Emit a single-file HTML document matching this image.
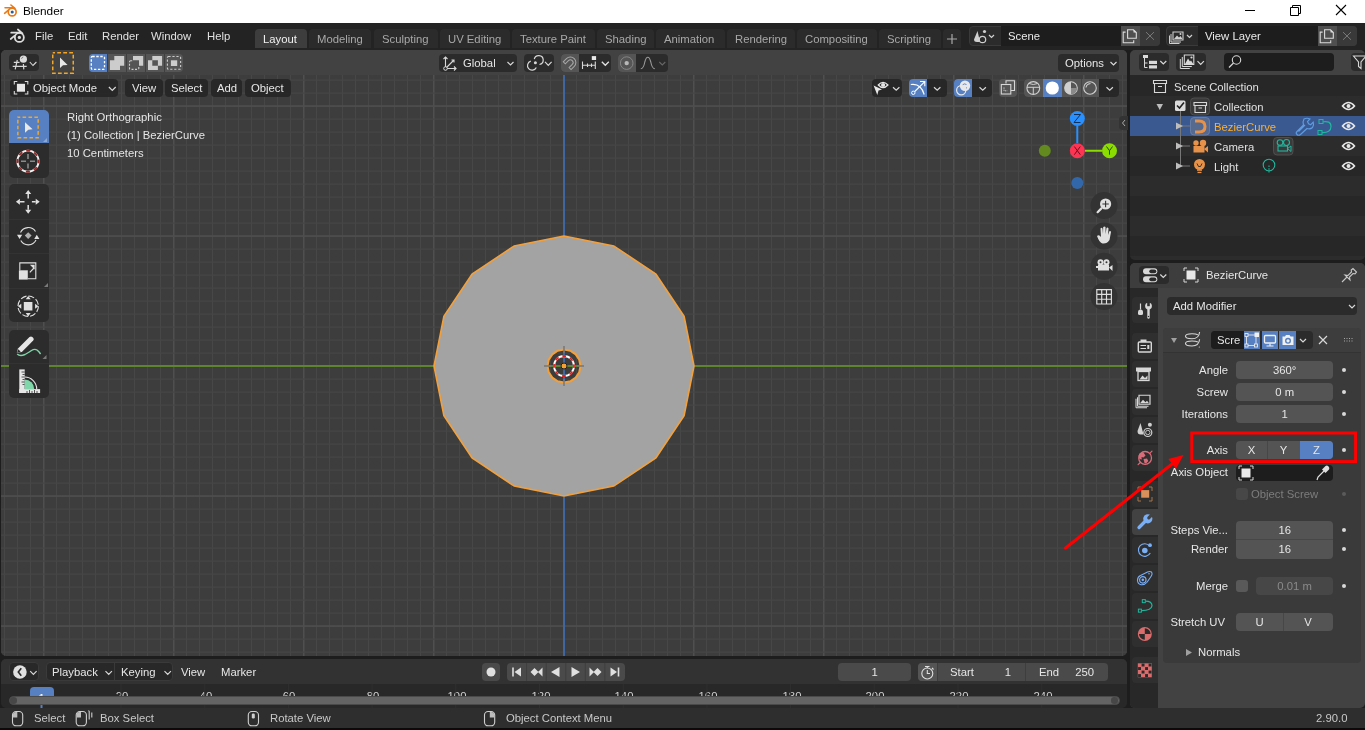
<!DOCTYPE html>
<html><head><meta charset="utf-8">
<style>
*{margin:0;padding:0;box-sizing:border-box}
html,body{width:1365px;height:730px;overflow:hidden;background:#1d1d1d;font-family:"Liberation Sans",sans-serif;font-size:11.3px;color:#e6e6e6}
.a{position:absolute}
.t{position:absolute;white-space:nowrap;line-height:20px;will-change:transform}
svg{position:absolute;overflow:visible}
.btn{position:absolute;border-radius:4px}
.dk{background:#2b2b2b}
</style></head><body>
<!-- TITLE BAR -->
<div class="a" style="left:0;top:0;width:1365px;height:23px;background:#fff"></div>
<svg style="left:0;top:0" width="30" height="22" viewBox="0 0 30 22">
 <g transform="translate(12.2 12) scale(0.88) translate(-11.35 -10.46)">
 <circle cx="11.35" cy="10.46" r="4.5" fill="#fff" stroke="#ea7a14" stroke-width="1.9"/>
 <circle cx="11.35" cy="10.46" r="1.8" fill="#2a5f96"/>
 <path d="M3.2 5.7 H12.1 M2.7 12 L6.7 8.6 M9.9 2.5 L14.5 6.3" stroke="#ea7a14" stroke-width="1.8" stroke-linecap="round" fill="none"/>
 </g>
</svg>
<div class="t" style="left:23px;top:1px;color:#000;font-size:11.8px">Blender</div>
<svg style="left:1240px;top:0" width="125" height="22">
 <path d="M5 10.5 H15" stroke="#000" stroke-width="1"/>
 <path d="M50.5 7.5 h8 v8 h-8 z M52.5 7.5 v-2 h8 v8 h-2" stroke="#000" stroke-width="1" fill="none"/>
 <path d="M96 5 L106 15 M106 5 L96 15" stroke="#000" stroke-width="1.1"/>
</svg>
<!-- TOP BAR -->
<div class="a" style="left:0;top:23px;width:1365px;height:27px;background:#232323"></div>
<svg style="left:8px;top:27px" width="20" height="18" viewBox="0 0 20 18">
 <circle cx="11.35" cy="10.46" r="4.5" fill="none" stroke="#dedede" stroke-width="1.8"/>
 <circle cx="11.35" cy="10.46" r="1.6" fill="#dedede"/>
 <path d="M3.2 5.7 H12.1 M2.7 12 L6.7 8.6 M9.9 2.5 L14.5 6.3" stroke="#dedede" stroke-width="1.7" stroke-linecap="round" fill="none"/>
</svg>
<div class="t" style="left:34.5px;top:26.2px;color:#e0e0e0">File</div>
<div class="t" style="left:67.5px;top:26.2px;color:#e0e0e0">Edit</div>
<div class="t" style="left:101.8px;top:26.2px;color:#e0e0e0">Render</div>
<div class="t" style="left:151.3px;top:26.2px;color:#e0e0e0">Window</div>
<div class="t" style="left:206.8px;top:26.2px;color:#e0e0e0">Help</div>
<div class="a" style="left:255px;top:28.5px;width:52px;height:19.5px;background:#3d3d3d;border-radius:4px 4px 0 0"></div>
<div class="a" style="left:309px;top:28.5px;width:62px;height:19.5px;background:#2b2b2b;border-radius:4px 4px 0 0"></div>
<div class="a" style="left:374px;top:28.5px;width:64px;height:19.5px;background:#2b2b2b;border-radius:4px 4px 0 0"></div>
<div class="a" style="left:440px;top:28.5px;width:70px;height:19.5px;background:#2b2b2b;border-radius:4px 4px 0 0"></div>
<div class="a" style="left:512px;top:28.5px;width:83px;height:19.5px;background:#2b2b2b;border-radius:4px 4px 0 0"></div>
<div class="a" style="left:597px;top:28.5px;width:57px;height:19.5px;background:#2b2b2b;border-radius:4px 4px 0 0"></div>
<div class="a" style="left:656px;top:28.5px;width:69px;height:19.5px;background:#2b2b2b;border-radius:4px 4px 0 0"></div>
<div class="a" style="left:727px;top:28.5px;width:68px;height:19.5px;background:#2b2b2b;border-radius:4px 4px 0 0"></div>
<div class="a" style="left:797px;top:28.5px;width:80px;height:19.5px;background:#2b2b2b;border-radius:4px 4px 0 0"></div>
<div class="a" style="left:879px;top:28.5px;width:62px;height:19.5px;background:#2b2b2b;border-radius:4px 4px 0 0"></div>
<div class="a" style="left:943px;top:28.5px;width:18px;height:19.5px;background:#2b2b2b;border-radius:4px 4px 0 0"></div>
<div class="t" style="left:263.3px;top:29.4px;color:#f0f0f0">Layout</div>
<div class="t" style="left:316.5px;top:29.4px;color:#a8a8a8">Modeling</div>
<div class="t" style="left:381.5px;top:29.4px;color:#a8a8a8">Sculpting</div>
<div class="t" style="left:447.5px;top:29.4px;color:#a8a8a8">UV Editing</div>
<div class="t" style="left:519.5px;top:29.4px;color:#a8a8a8">Texture Paint</div>
<div class="t" style="left:604.5px;top:29.4px;color:#a8a8a8">Shading</div>
<div class="t" style="left:663.5px;top:29.4px;color:#a8a8a8">Animation</div>
<div class="t" style="left:734.5px;top:29.4px;color:#a8a8a8">Rendering</div>
<div class="t" style="left:804.5px;top:29.4px;color:#a8a8a8">Compositing</div>
<div class="t" style="left:886.5px;top:29.4px;color:#a8a8a8">Scripting</div>
<svg style="left:943px;top:28px" width="18" height="22"><path d="M9 6 V16 M4 11 H14" stroke="#a8a8a8" stroke-width="1.2"/></svg>
<!-- scene selector -->
<div class="a" style="left:969px;top:26px;width:191px;height:20px;background:#2b2b2b;border-radius:4px;border:1px solid #3a3a3a"></div>
<div class="a" style="left:1000.5px;top:26px;width:120.5px;height:20px;background:#1d1d1d"></div>
<div class="a" style="left:1121px;top:26px;width:19px;height:20px;background:#4f4f4f"></div>
<div class="a" style="left:1140px;top:26px;width:20px;height:20px;background:#393939;border-radius:0 4px 4px 0"></div>
<svg style="left:969px;top:26px" width="32" height="20">
 <path d="M8.5 5 L5 13.5 Q5 16 8 16 L11 16 Z" fill="#d0d0d0"/>
 <circle cx="13.5" cy="13.5" r="3.2" fill="none" stroke="#d0d0d0" stroke-width="1.2"/>
 <circle cx="15.5" cy="5.5" r="1.6" fill="#d0d0d0"/>
 <path d="M20 9 L22.5 11.5 L25 9" stroke="#d0d0d0" stroke-width="1.2" fill="none"/>
</svg>
<div class="t" style="left:1008px;top:26.3px;color:#eaeaea">Scene</div>
<svg style="left:1121px;top:26px" width="40" height="20">
 <path d="M6.6 3.8 H12.5 L15.3 6.6 V12.2 H6.6 Z" stroke="#dcdcdc" stroke-width="1.1" fill="none"/>
 <path d="M12.5 3.8 V6.6 H15.3 Z" fill="#dcdcdc"/>
 <path d="M4.6 6.1 H2.2 V16.7 H12.7 V14.3" stroke="#dcdcdc" stroke-width="1.1" fill="none"/>
 <path d="M25 6.1 L33 13.8 M33 6.1 L25 13.8" stroke="#7a7a7a" stroke-width="1"/>
</svg>
<!-- view layer -->
<div class="a" style="left:1166px;top:26px;width:191px;height:20px;background:#2b2b2b;border-radius:4px;border:1px solid #3a3a3a"></div>
<div class="a" style="left:1198px;top:26px;width:120px;height:20px;background:#1d1d1d"></div>
<div class="a" style="left:1318px;top:26px;width:19px;height:20px;background:#4f4f4f"></div>
<div class="a" style="left:1337px;top:26px;width:20px;height:20px;background:#393939;border-radius:0 4px 4px 0"></div>
<svg style="left:1166px;top:26px" width="32" height="20">
 <path d="M7 6 h10 v8 h-10 z" stroke="#d0d0d0" stroke-width="1.1" fill="none"/>
 <path d="M5 8 v8 h10 M3.5 9.5 v8 h10" stroke="#d0d0d0" stroke-width="1" fill="none"/>
 <path d="M8 13 L11 9.5 L13 11.5 L14.5 10 L16.5 13 Z" fill="#d0d0d0"/>
 <circle cx="14.5" cy="8" r="1" fill="#d0d0d0"/>
 <path d="M21 9 L23.5 11.5 L26 9" stroke="#d0d0d0" stroke-width="1.2" fill="none"/>
</svg>
<div class="t" style="left:1204.8px;top:26.3px;color:#eaeaea">View Layer</div>
<svg style="left:1318px;top:26px" width="40" height="20">
 <path d="M6.6 3.8 H12.5 L15.3 6.6 V12.2 H6.6 Z" stroke="#dcdcdc" stroke-width="1.1" fill="none"/>
 <path d="M12.5 3.8 V6.6 H15.3 Z" fill="#dcdcdc"/>
 <path d="M4.6 6.1 H2.2 V16.7 H12.7 V14.3" stroke="#dcdcdc" stroke-width="1.1" fill="none"/>
 <path d="M25 6.1 L33 13.8 M33 6.1 L25 13.8" stroke="#7a7a7a" stroke-width="1"/>
</svg>

<!-- VIEWPORT -->

<div class="a" style="left:1px;top:50px;width:1126px;height:606px;border-radius:5px;overflow:hidden;background:#3d3d3d">
<svg style="left:-1px;top:-50px" width="1130" height="660">
<rect x="3.90" y="50" width="1.2" height="610" fill="#474747"/>
<rect x="16.90" y="50" width="1.2" height="610" fill="#474747"/>
<rect x="29.90" y="50" width="1.2" height="610" fill="#474747"/>
<rect x="42.95" y="50" width="1.6" height="610" fill="#4f4f4f"/>
<rect x="55.90" y="50" width="1.2" height="610" fill="#474747"/>
<rect x="68.90" y="50" width="1.2" height="610" fill="#474747"/>
<rect x="81.90" y="50" width="1.2" height="610" fill="#474747"/>
<rect x="94.90" y="50" width="1.2" height="610" fill="#474747"/>
<rect x="107.90" y="50" width="1.2" height="610" fill="#474747"/>
<rect x="120.90" y="50" width="1.2" height="610" fill="#474747"/>
<rect x="133.90" y="50" width="1.2" height="610" fill="#474747"/>
<rect x="146.90" y="50" width="1.2" height="610" fill="#474747"/>
<rect x="159.90" y="50" width="1.2" height="610" fill="#474747"/>
<rect x="172.95" y="50" width="1.6" height="610" fill="#4f4f4f"/>
<rect x="185.90" y="50" width="1.2" height="610" fill="#474747"/>
<rect x="198.90" y="50" width="1.2" height="610" fill="#474747"/>
<rect x="211.90" y="50" width="1.2" height="610" fill="#474747"/>
<rect x="224.90" y="50" width="1.2" height="610" fill="#474747"/>
<rect x="237.90" y="50" width="1.2" height="610" fill="#474747"/>
<rect x="250.90" y="50" width="1.2" height="610" fill="#474747"/>
<rect x="263.90" y="50" width="1.2" height="610" fill="#474747"/>
<rect x="276.90" y="50" width="1.2" height="610" fill="#474747"/>
<rect x="289.90" y="50" width="1.2" height="610" fill="#474747"/>
<rect x="302.95" y="50" width="1.6" height="610" fill="#4f4f4f"/>
<rect x="315.90" y="50" width="1.2" height="610" fill="#474747"/>
<rect x="328.90" y="50" width="1.2" height="610" fill="#474747"/>
<rect x="341.90" y="50" width="1.2" height="610" fill="#474747"/>
<rect x="354.90" y="50" width="1.2" height="610" fill="#474747"/>
<rect x="367.90" y="50" width="1.2" height="610" fill="#474747"/>
<rect x="380.90" y="50" width="1.2" height="610" fill="#474747"/>
<rect x="393.90" y="50" width="1.2" height="610" fill="#474747"/>
<rect x="406.90" y="50" width="1.2" height="610" fill="#474747"/>
<rect x="419.90" y="50" width="1.2" height="610" fill="#474747"/>
<rect x="432.95" y="50" width="1.6" height="610" fill="#4f4f4f"/>
<rect x="445.90" y="50" width="1.2" height="610" fill="#474747"/>
<rect x="458.90" y="50" width="1.2" height="610" fill="#474747"/>
<rect x="471.90" y="50" width="1.2" height="610" fill="#474747"/>
<rect x="484.90" y="50" width="1.2" height="610" fill="#474747"/>
<rect x="497.90" y="50" width="1.2" height="610" fill="#474747"/>
<rect x="510.90" y="50" width="1.2" height="610" fill="#474747"/>
<rect x="523.90" y="50" width="1.2" height="610" fill="#474747"/>
<rect x="536.90" y="50" width="1.2" height="610" fill="#474747"/>
<rect x="549.90" y="50" width="1.2" height="610" fill="#474747"/>
<rect x="575.90" y="50" width="1.2" height="610" fill="#474747"/>
<rect x="588.90" y="50" width="1.2" height="610" fill="#474747"/>
<rect x="601.90" y="50" width="1.2" height="610" fill="#474747"/>
<rect x="614.90" y="50" width="1.2" height="610" fill="#474747"/>
<rect x="627.90" y="50" width="1.2" height="610" fill="#474747"/>
<rect x="640.90" y="50" width="1.2" height="610" fill="#474747"/>
<rect x="653.90" y="50" width="1.2" height="610" fill="#474747"/>
<rect x="666.90" y="50" width="1.2" height="610" fill="#474747"/>
<rect x="679.90" y="50" width="1.2" height="610" fill="#474747"/>
<rect x="692.95" y="50" width="1.6" height="610" fill="#4f4f4f"/>
<rect x="705.90" y="50" width="1.2" height="610" fill="#474747"/>
<rect x="718.90" y="50" width="1.2" height="610" fill="#474747"/>
<rect x="731.90" y="50" width="1.2" height="610" fill="#474747"/>
<rect x="744.90" y="50" width="1.2" height="610" fill="#474747"/>
<rect x="757.90" y="50" width="1.2" height="610" fill="#474747"/>
<rect x="770.90" y="50" width="1.2" height="610" fill="#474747"/>
<rect x="783.90" y="50" width="1.2" height="610" fill="#474747"/>
<rect x="796.90" y="50" width="1.2" height="610" fill="#474747"/>
<rect x="809.90" y="50" width="1.2" height="610" fill="#474747"/>
<rect x="822.95" y="50" width="1.6" height="610" fill="#4f4f4f"/>
<rect x="835.90" y="50" width="1.2" height="610" fill="#474747"/>
<rect x="848.90" y="50" width="1.2" height="610" fill="#474747"/>
<rect x="861.90" y="50" width="1.2" height="610" fill="#474747"/>
<rect x="874.90" y="50" width="1.2" height="610" fill="#474747"/>
<rect x="887.90" y="50" width="1.2" height="610" fill="#474747"/>
<rect x="900.90" y="50" width="1.2" height="610" fill="#474747"/>
<rect x="913.90" y="50" width="1.2" height="610" fill="#474747"/>
<rect x="926.90" y="50" width="1.2" height="610" fill="#474747"/>
<rect x="939.90" y="50" width="1.2" height="610" fill="#474747"/>
<rect x="952.95" y="50" width="1.6" height="610" fill="#4f4f4f"/>
<rect x="965.90" y="50" width="1.2" height="610" fill="#474747"/>
<rect x="978.90" y="50" width="1.2" height="610" fill="#474747"/>
<rect x="991.90" y="50" width="1.2" height="610" fill="#474747"/>
<rect x="1004.90" y="50" width="1.2" height="610" fill="#474747"/>
<rect x="1017.90" y="50" width="1.2" height="610" fill="#474747"/>
<rect x="1030.90" y="50" width="1.2" height="610" fill="#474747"/>
<rect x="1043.90" y="50" width="1.2" height="610" fill="#474747"/>
<rect x="1056.90" y="50" width="1.2" height="610" fill="#474747"/>
<rect x="1069.90" y="50" width="1.2" height="610" fill="#474747"/>
<rect x="1082.95" y="50" width="1.6" height="610" fill="#4f4f4f"/>
<rect x="1095.90" y="50" width="1.2" height="610" fill="#474747"/>
<rect x="1108.90" y="50" width="1.2" height="610" fill="#474747"/>
<rect x="1121.90" y="50" width="1.2" height="610" fill="#474747"/>
<rect x="0" y="53.50" width="1130" height="1.2" fill="#474747"/>
<rect x="0" y="66.50" width="1130" height="1.2" fill="#474747"/>
<rect x="0" y="79.50" width="1130" height="1.2" fill="#474747"/>
<rect x="0" y="92.50" width="1130" height="1.2" fill="#474747"/>
<rect x="0" y="105.25" width="1130" height="1.6" fill="#4f4f4f"/>
<rect x="0" y="118.50" width="1130" height="1.2" fill="#474747"/>
<rect x="0" y="131.50" width="1130" height="1.2" fill="#474747"/>
<rect x="0" y="144.50" width="1130" height="1.2" fill="#474747"/>
<rect x="0" y="157.50" width="1130" height="1.2" fill="#474747"/>
<rect x="0" y="170.50" width="1130" height="1.2" fill="#474747"/>
<rect x="0" y="183.50" width="1130" height="1.2" fill="#474747"/>
<rect x="0" y="196.50" width="1130" height="1.2" fill="#474747"/>
<rect x="0" y="209.50" width="1130" height="1.2" fill="#474747"/>
<rect x="0" y="222.50" width="1130" height="1.2" fill="#474747"/>
<rect x="0" y="235.25" width="1130" height="1.6" fill="#4f4f4f"/>
<rect x="0" y="248.50" width="1130" height="1.2" fill="#474747"/>
<rect x="0" y="261.50" width="1130" height="1.2" fill="#474747"/>
<rect x="0" y="274.50" width="1130" height="1.2" fill="#474747"/>
<rect x="0" y="287.50" width="1130" height="1.2" fill="#474747"/>
<rect x="0" y="300.50" width="1130" height="1.2" fill="#474747"/>
<rect x="0" y="313.50" width="1130" height="1.2" fill="#474747"/>
<rect x="0" y="326.50" width="1130" height="1.2" fill="#474747"/>
<rect x="0" y="339.50" width="1130" height="1.2" fill="#474747"/>
<rect x="0" y="352.50" width="1130" height="1.2" fill="#474747"/>
<rect x="0" y="378.50" width="1130" height="1.2" fill="#474747"/>
<rect x="0" y="391.50" width="1130" height="1.2" fill="#474747"/>
<rect x="0" y="404.50" width="1130" height="1.2" fill="#474747"/>
<rect x="0" y="417.50" width="1130" height="1.2" fill="#474747"/>
<rect x="0" y="430.50" width="1130" height="1.2" fill="#474747"/>
<rect x="0" y="443.50" width="1130" height="1.2" fill="#474747"/>
<rect x="0" y="456.50" width="1130" height="1.2" fill="#474747"/>
<rect x="0" y="469.50" width="1130" height="1.2" fill="#474747"/>
<rect x="0" y="482.50" width="1130" height="1.2" fill="#474747"/>
<rect x="0" y="495.25" width="1130" height="1.6" fill="#4f4f4f"/>
<rect x="0" y="508.50" width="1130" height="1.2" fill="#474747"/>
<rect x="0" y="521.50" width="1130" height="1.2" fill="#474747"/>
<rect x="0" y="534.50" width="1130" height="1.2" fill="#474747"/>
<rect x="0" y="547.50" width="1130" height="1.2" fill="#474747"/>
<rect x="0" y="560.50" width="1130" height="1.2" fill="#474747"/>
<rect x="0" y="573.50" width="1130" height="1.2" fill="#474747"/>
<rect x="0" y="586.50" width="1130" height="1.2" fill="#474747"/>
<rect x="0" y="599.50" width="1130" height="1.2" fill="#474747"/>
<rect x="0" y="612.50" width="1130" height="1.2" fill="#474747"/>
<rect x="0" y="625.25" width="1130" height="1.6" fill="#4f4f4f"/>
<rect x="0" y="638.50" width="1130" height="1.2" fill="#474747"/>
<rect x="0" y="651.50" width="1130" height="1.2" fill="#474747"/>
<rect x="0" y="365" width="1130" height="2" fill="#5f8430"/>
<rect x="563" y="50" width="2" height="610" fill="#3f66a0"/>
<path d="M564.00 236.00 L514.25 245.90 L472.08 274.08 L443.90 316.25 L434.00 366.00 L443.90 415.75 L472.08 457.92 L514.25 486.10 L564.00 496.00 L613.75 486.10 L655.92 457.92 L684.10 415.75 L694.00 366.00 L684.10 316.25 L655.92 274.08 L613.75 245.90 Z M564.00 349.50 L557.69 350.76 L552.33 354.33 L548.76 359.69 L547.50 366.00 L548.76 372.31 L552.33 377.67 L557.69 381.24 L564.00 382.50 L570.31 381.24 L575.67 377.67 L579.24 372.31 L580.50 366.00 L579.24 359.69 L575.67 354.33 L570.31 350.76 Z" fill="#a3a3a3" fill-rule="evenodd"/>
<path d="M564.00 236.00 L514.25 245.90 L472.08 274.08 L443.90 316.25 L434.00 366.00 L443.90 415.75 L472.08 457.92 L514.25 486.10 L564.00 496.00 L613.75 486.10 L655.92 457.92 L684.10 415.75 L694.00 366.00 L684.10 316.25 L655.92 274.08 L613.75 245.90 Z" fill="none" stroke="#f4a03a" stroke-width="1.6"/>
<path d="M564.00 349.50 L557.69 350.76 L552.33 354.33 L548.76 359.69 L547.50 366.00 L548.76 372.31 L552.33 377.67 L557.69 381.24 L564.00 382.50 L570.31 381.24 L575.67 377.67 L579.24 372.31 L580.50 366.00 L579.24 359.69 L575.67 354.33 L570.31 350.76 Z" fill="none" stroke="#f4a03a" stroke-width="2"/>
<!-- 3d cursor -->
<circle cx="564" cy="366" r="10" fill="none" stroke="#ffffff" stroke-width="1.8"/>
<circle cx="564" cy="366" r="10" fill="none" stroke="#e02020" stroke-width="1.8" stroke-dasharray="3.9 3.95" stroke-dashoffset="2"/>
<path d="M564 346 V353 M564 379 V386 M544 366 H551 M577 366 H584" stroke="#777" stroke-width="1.5"/>
<circle cx="564" cy="366" r="3" fill="#f5a030" stroke="#222" stroke-width="1"/>
<!-- gizmo -->
<path d="M1077.3 126 V143" stroke="#2890ff" stroke-width="2"/>
<path d="M1085 150.7 H1102" stroke="#8bdc00" stroke-width="2"/>
<circle cx="1044.8" cy="150.7" r="6" fill="#628a1e"/>
<circle cx="1077.3" cy="182.9" r="6" fill="#3268a9"/>
<circle cx="1077.3" cy="118.5" r="7.5" fill="#2890ff"/>
<circle cx="1077.3" cy="150.7" r="7.5" fill="#ff3352"/>
<circle cx="1109.5" cy="150.7" r="7.5" fill="#8bdc00"/>
<path d="M1074 114.5 H1080.5 L1074 122.5 H1080.5" stroke="#12305a" stroke-width="1" fill="none"/>
<path d="M1074.3 146.5 L1080.3 154.7 M1080.3 146.5 L1074.3 154.7" stroke="#6a1020" stroke-width="1" fill="none"/>
<path d="M1106.5 146.5 L1109.5 150.7 L1112.5 146.5 M1109.5 150.7 V154.7" stroke="#2b4a00" stroke-width="1" fill="none"/>
<!-- nav buttons -->
<circle cx="1104" cy="205.5" r="13.5" fill="#333333"/>
<circle cx="1104" cy="236" r="13.5" fill="#333333"/>
<circle cx="1104" cy="266.2" r="13.5" fill="#333333"/>
<circle cx="1104" cy="296.5" r="13.5" fill="#333333"/>
<circle cx="1105.6" cy="204" r="5.6" fill="#e0e0e0"/>
<path d="M1105.6 200.8 V207.2 M1102.4 204 H1108.8" stroke="#333" stroke-width="1.1"/>
<path d="M1101.4 208.4 L1097.6 212.2" stroke="#e0e0e0" stroke-width="2.2" stroke-linecap="round"/>
<path d="M1097 236 Q1099 234 1101 237 L1100.5 228.5 Q1101.5 227 1102.5 228.5 L1103 234 L1103.2 227 Q1104.5 225.8 1105.5 227 L1105.6 234 L1106.5 228 Q1107.8 227 1108.5 228.5 L1108 235 L1109.5 231 Q1110.8 230.5 1111 232 L1109.5 240 Q1107 244 1102.5 243.5 Q1099.5 243 1097 236 Z" fill="#e0e0e0"/>
<circle cx="1100.5" cy="262.3" r="3" fill="#e0e0e0"/><circle cx="1106.5" cy="262.3" r="3" fill="#e0e0e0"/>
<rect x="1098" y="264.5" width="11" height="6" fill="#e0e0e0"/>
<path d="M1109 267.5 L1112.5 265 V271 Z M1096 266 H1098 V268 H1096 Z" fill="#e0e0e0"/>
<circle cx="1100.5" cy="262.3" r="1" fill="#333"/><circle cx="1106.5" cy="262.3" r="1" fill="#333"/>
<path d="M1096.8 289.6 h14.6 v14.4 h-14.6 z M1096.8 294.4 h14.6 M1096.8 299.2 h14.6 M1101.7 289.6 v14.4 M1106.5 289.6 v14.4" stroke="#e0e0e0" stroke-width="1.15" fill="none"/>
</svg>
<!-- tool header row -->
<div class="a" style="left:0;top:0;width:1126px;height:25px;background:#424242"></div>
</div>
<!-- tool header -->
<div class="btn dk" style="left:9.3px;top:54.1px;width:29.3px;height:17.4px"></div>
<svg style="left:9.3px;top:54.1px" width="30" height="18">
 <path d="M4.8 8.4 H10.5 M3.7 12.4 H17.7 M8.3 6 L6.2 15.4 M14.4 10 L14.8 15.4" stroke="#d8d8d8" stroke-width="1.2" fill="none"/>
 <circle cx="14.4" cy="5.2" r="3.6" fill="#dcdcdc"/>
 <path d="M12.5 4.8 Q13 3.2 14.3 3" stroke="#555" stroke-width="0.7" fill="none"/>
 <path d="M20.8 8 L24 11.5 L27.4 8" stroke="#d8d8d8" stroke-width="1.1" fill="none"/>
</svg>
<svg style="left:52px;top:52.2px" width="22" height="22">
 <rect x="0.75" y="0.75" width="20.5" height="20.5" fill="none" stroke="#f5a623" stroke-width="1.5" stroke-dasharray="3.8 2.2" stroke-dashoffset="1.5"/>
 <path d="M8 5.5 L15.6 12.9 L11 13.3 L8 15.9 Z" fill="#e8e8e8"/>
</svg>
<div class="btn" style="left:89px;top:54px;width:94.2px;height:18px;background:#555555"></div>
<div class="a" style="left:89px;top:54px;width:18.3px;height:18px;background:#5680c2;border-radius:4px 0 0 4px"></div>
<svg style="left:89px;top:54px" width="95" height="18">
 <path d="M18.5 0 V18 M37.5 0 V18 M56.5 0 V18 M75.5 0 V18" stroke="#3f3f3f" stroke-width="1"/>
 <rect x="2.3" y="2.5" width="13.2" height="12.8" rx="1" fill="none" stroke="#fff" stroke-width="1.3" stroke-dasharray="2.4 1.6"/>
 <path d="M20.9 6.3 H25.3 V2 H35.2 V11.75 H31 V15.9 H20.9 Z" fill="#cccccc"/>
 <rect x="40.5" y="6.8" width="9.3" height="8.6" rx="1" fill="none" stroke="#cccccc" stroke-width="1.1" stroke-dasharray="2 1.5"/>
 <rect x="43.5" y="5.5" width="7.5" height="7" fill="#555555"/>
 <path d="M44 2 H54.2 V11.75 H50 V6.3 H44 Z" fill="#cccccc"/>
 <path d="M59 6.3 H68.9 V15.9 H59 Z M63.3 2 H73.1 V11.75 H63.3 Z" fill="#cccccc" fill-rule="evenodd"/>
 <rect x="78.4" y="2.5" width="13.2" height="12.8" rx="1" fill="none" stroke="#cccccc" stroke-width="1.1" stroke-dasharray="2.2 1.8"/>
 <rect x="81.9" y="6.3" width="6.3" height="5.7" fill="#cccccc"/>
</svg>
<div class="btn dk" style="left:439.3px;top:54px;width:77.4px;height:17.7px"></div>
<svg style="left:439.3px;top:54px" width="78" height="18">
 <path d="M6.5 3 V14.5 H17 M6.5 14.5 L14.5 6.5 M4.5 5 L6.5 3 L8.5 5 M15 12.5 L17 14.5 L15 16.5 M12.5 6 H15 V8.5" stroke="#d8d8d8" stroke-width="1.1" fill="none"/>
 <circle cx="6.5" cy="14.5" r="1.8" fill="#2b2b2b" stroke="#d8d8d8" stroke-width="1"/>
 <path d="M68.5 8 L71.5 11 L74.5 8" stroke="#d8d8d8" stroke-width="1.2" fill="none"/>
</svg>
<div class="t" style="left:462.5px;top:53px;color:#e6e6e6">Global</div>
<div class="btn dk" style="left:524.1px;top:54px;width:29.8px;height:17.7px"></div>
<svg style="left:524.1px;top:54px" width="30" height="18">
 <path d="M10.3 5.2 A4.5 4.5 0 1 1 15.5 10.5" stroke="#d8d8d8" stroke-width="1.2" fill="none"/>
 <path d="M12.3 13.5 A4.6 4.6 0 1 1 6.8 7.2" stroke="#d8d8d8" stroke-width="1.2" fill="none"/>
 <circle cx="11.4" cy="8.7" r="1.5" fill="#d8d8d8"/>
 <path d="M21 7.8 L24.3 11.3 L27.6 7.8" stroke="#d8d8d8" stroke-width="1.2" fill="none"/>
</svg>
<div class="btn dk" style="left:561px;top:54px;width:49.9px;height:17.7px"></div>
<div class="a" style="left:561px;top:54px;width:18.2px;height:17.7px;background:#555555;border-radius:4px 0 0 4px"></div>
<svg style="left:561px;top:54px" width="50" height="18">
 <g transform="rotate(45 9.3 8.6)"><path d="M3.8 8.5 V13 H6.6 V8.5 A2.7 2.7 0 0 1 12 8.5 V13 H14.8 V8.5 A5.5 5.5 0 0 0 3.8 8.5 Z" stroke="#a8a8a8" stroke-width="1" fill="none"/></g>
 <path d="M21.5 11.2 H34.3 M21.5 7.5 V15 M26.5 9.5 V13 M30.5 9.5 V13 M34.3 7.5 V15" stroke="#d8d8d8" stroke-width="1.1" fill="none"/>
 <rect x="30.8" y="2.1" width="4.3" height="3.9" fill="#e8e8e8"/>
 <path d="M40.8 7.8 L44.3 11.3 L47.8 7.8" stroke="#e0e0e0" stroke-width="1.3" fill="none"/>
</svg>
<div class="btn dk" style="left:618.2px;top:54px;width:49.8px;height:17.7px"></div>
<div class="a" style="left:618.2px;top:54px;width:17.8px;height:17.7px;background:#555555;border-radius:4px 0 0 4px"></div>
<svg style="left:618.2px;top:54px" width="50" height="18">
 <circle cx="8.7" cy="9.1" r="6.3" fill="none" stroke="#8a8a8a" stroke-width="0.9"/>
 <circle cx="8.7" cy="9.1" r="2.2" fill="#b8b8b8"/>
 <path d="M22.8 14.8 Q25.5 14.8 26.8 8 Q28 3.2 29.8 3.2 Q31.6 3.2 32.8 8 Q34.1 14.8 36.9 14.8" stroke="#9a9a9a" stroke-width="1.1" fill="none"/>
 <path d="M41.3 8 L44.3 11 L47.3 8" stroke="#666" stroke-width="1.1" fill="none"/>
</svg>
<div class="btn dk" style="left:1058px;top:54px;width:61px;height:18px"></div>
<div class="t" style="left:1064.5px;top:53px;color:#e6e6e6">Options</div>
<svg style="left:1100px;top:54px" width="19" height="18"><path d="M10.5 8 L13.5 11 L16.5 8" stroke="#d8d8d8" stroke-width="1.2" fill="none"/></svg>
<!-- header row 2 -->
<div class="btn dk" style="left:10px;top:79px;width:108px;height:18px;background:rgba(35,35,35,0.85)"></div>
<svg style="left:10px;top:79px" width="108" height="18">
 <path d="M4.3 5.5 V2.5 H7.3 M14.8 2.5 H17.8 V5.5 M17.8 12 V15 H14.8 M7.3 15 H4.3 V12" stroke="#d8d8d8" stroke-width="1.1" fill="none"/>
 <rect x="6.9" y="4.8" width="8.1" height="7.9" fill="#e8e8e8"/>
 <path d="M98.9 8 L102.3 11.5 L105.7 8" stroke="#d8d8d8" stroke-width="1.2" fill="none"/>
</svg>
<div class="t" style="left:32.6px;top:78.2px;color:#e6e6e6">Object Mode</div>
<div class="btn dk" style="left:125px;top:79px;width:38px;height:18px;background:rgba(35,35,35,0.85)"></div>
<div class="btn dk" style="left:165px;top:79px;width:43px;height:18px;background:rgba(35,35,35,0.85)"></div>
<div class="btn dk" style="left:211px;top:79px;width:31px;height:18px;background:rgba(35,35,35,0.85)"></div>
<div class="btn dk" style="left:245px;top:79px;width:45.5px;height:18px;background:rgba(35,35,35,0.85)"></div>
<div class="t" style="left:131.5px;top:78.2px;color:#e6e6e6">View</div>
<div class="t" style="left:170.5px;top:78.2px;color:#e6e6e6">Select</div>
<div class="t" style="left:216.5px;top:78.2px;color:#e6e6e6">Add</div>
<div class="t" style="left:250.5px;top:78.2px;color:#e6e6e6">Object</div>
<!-- right header items -->
<div class="btn dk" style="left:872px;top:79px;width:30px;height:18px;background:rgba(35,35,35,0.85)"></div>
<svg style="left:872px;top:79px" width="30" height="18">
 <path d="M6.3 6 Q11 0.8 15.9 6 Q11 11.2 6.3 6 Z" fill="none" stroke="#e6e6e6" stroke-width="1.3"/>
 <circle cx="11.1" cy="6" r="2.1" fill="#e6e6e6"/>
 <path d="M1.6 6.4 L10 10.4 L6.5 11.6 L5.3 16 Z" fill="#e6e6e6"/>
 <path d="M21 8.3 L24.2 11.3 L27.4 8.3" stroke="#d8d8d8" stroke-width="1.2" fill="none"/>
</svg>
<div class="btn dk" style="left:909px;top:79px;width:38px;height:18px;background:rgba(35,35,35,0.85)"></div>
<div class="a" style="left:909px;top:79px;width:18px;height:18px;background:#5680c2;border-radius:4px 0 0 4px"></div>
<svg style="left:909px;top:79px" width="38" height="18">
 <path d="M1.8 5.5 Q12 4 15.2 15.5" stroke="#fff" stroke-width="1.1" fill="none"/>
 <path d="M5.2 13 L15.5 2.8 M11 2.5 H15.8 V7.3" stroke="#fff" stroke-width="1.1" fill="none"/>
 <circle cx="4.3" cy="13.8" r="1.7" fill="#5680c2" stroke="#fff" stroke-width="1"/>
 <path d="M25 8.3 L28.2 11.3 L31.4 8.3" stroke="#d8d8d8" stroke-width="1.2" fill="none"/>
</svg>
<div class="btn dk" style="left:954px;top:79px;width:37.5px;height:18px;background:rgba(35,35,35,0.85)"></div>
<div class="a" style="left:954px;top:79px;width:18px;height:18px;background:#5680c2;border-radius:4px 0 0 4px"></div>
<svg style="left:954px;top:79px" width="38" height="18">
 <circle cx="11" cy="6.8" r="5.2" fill="#e8e8e8"/>
 <path d="M8.5 6 Q10 4 12.5 5.5 M13 8.5 L11 10" stroke="#5680c2" stroke-width="0.9" fill="none"/>
 <circle cx="7.2" cy="11.2" r="4.6" fill="none" stroke="#e8e8e8" stroke-width="1.2"/>
 <path d="M25.5 8.3 L28.7 11.3 L31.9 8.3" stroke="#d8d8d8" stroke-width="1.2" fill="none"/>
</svg>
<div class="btn" style="left:999px;top:79px;width:18px;height:18px;background:#555555"></div>
<svg style="left:999px;top:79px" width="18" height="18">
 <path d="M7 4.5 V1.7 H15.5 V11.5 H12" stroke="#d8d8d8" stroke-width="1.1" fill="none"/>
 <rect x="2.3" y="5.5" width="9.5" height="9.5" fill="none" stroke="#d8d8d8" stroke-width="1.1"/>
 <path d="M5 8.5 V11.8 H8.5" stroke="#d8d8d8" stroke-width="1" fill="none" stroke-dasharray="1.2 1"/>
</svg>
<div class="btn dk" style="left:1024px;top:79px;width:95px;height:18px;background:rgba(35,35,35,0.85)"></div>
<div class="a" style="left:1024px;top:79px;width:75px;height:18px;background:#555555;border-radius:4px 0 0 4px"></div>
<div class="a" style="left:1043px;top:79px;width:19px;height:18px;background:#5680c2"></div>
<div class="a" style="left:1080.5px;top:79px;width:1px;height:18px;background:#444"></div>
<svg style="left:1024px;top:79px" width="95" height="18">
 <circle cx="9.3" cy="9" r="6.4" fill="none" stroke="#d0d0d0" stroke-width="1.1"/>
 <path d="M3 8.3 H15.6 M9.3 8.3 V15.4 M5 4.5 Q9.3 6.5 13.6 4.5" stroke="#d0d0d0" stroke-width="1" fill="none"/>
 <circle cx="28.3" cy="9" r="6.6" fill="#ffffff"/>
 <circle cx="47" cy="9" r="6.3" fill="none" stroke="#d0d0d0" stroke-width="1.1"/>
 <path d="M47 2.7 A6.3 6.3 0 0 0 47 15.3 Z" fill="#d0d0d0"/>
 <path d="M47 9 H53.3 A6.3 6.3 0 0 1 47 15.3 Z" fill="#8a8a8a"/>
 <circle cx="66" cy="9" r="6.3" fill="none" stroke="#d0d0d0" stroke-width="1.1"/>
 <path d="M62 8.5 Q62.5 5 66.5 4.5" stroke="#d0d0d0" stroke-width="1.1" fill="none"/>
 <path d="M68.5 14.3 A5.5 5.5 0 0 0 71.3 11" stroke="#d0d0d0" stroke-width="1" stroke-dasharray="1 1" fill="none"/>
 <path d="M82.5 8.3 L85.7 11.3 L88.9 8.3" stroke="#d8d8d8" stroke-width="1.2" fill="none"/>
</svg>
<!-- viewport text -->
<div class="t" style="left:67.4px;top:107.4px;color:#e6e6e6">Right Orthographic</div>
<div class="t" style="left:67.4px;top:125.2px;color:#e6e6e6">(1) Collection | BezierCurve</div>
<div class="t" style="left:67.4px;top:143px;color:#e6e6e6">10 Centimeters</div>
<!-- collapse tab -->
<div class="a" style="left:1119px;top:116px;width:9px;height:14px;background:#333;border-radius:4px 0 0 4px"></div>
<svg style="left:1119px;top:116px" width="9" height="14"><path d="M6 4 L3.5 7 L6 10" stroke="#aaa" stroke-width="1" fill="none"/></svg>
<!-- toolbar -->
<div class="btn" style="left:9px;top:109.7px;width:40px;height:68px;background:#2c2c2c;border-radius:5px"></div>
<div class="a" style="left:9px;top:109.7px;width:40px;height:33.3px;background:#5680c2;border-radius:5px 5px 0 0"></div>
<svg style="left:9px;top:109.7px" width="40" height="68">
 <rect x="8.85" y="7.15" width="20.3" height="20.6" fill="none" stroke="#f5a623" stroke-width="1.5" stroke-dasharray="3.6 2.3" stroke-dashoffset="1.2"/>
 <path d="M16 12.2 L23.6 19.3 L19.3 19.8 L16 22.7 Z" fill="#e8e8e8"/>
 <path d="M38 28 V32 H34 Z" fill="#8fa8d0"/>
 <circle cx="19" cy="51.2" r="10.6" fill="none" stroke="#f0f0f0" stroke-width="1.9"/>
 <circle cx="19" cy="51.2" r="10.6" fill="none" stroke="#9a2a2a" stroke-width="1.9" stroke-dasharray="4.16 4.16" stroke-dashoffset="2.08"/>
 <path d="M19 44 V49 M19 53.5 V58.5 M12 51.2 H17 M21 51.2 H26" stroke="#8a8a8a" stroke-width="1.6"/>
</svg>
<div class="btn" style="left:9px;top:184.4px;width:40px;height:137.5px;background:#2c2c2c;border-radius:5px"></div>
<div class="a" style="left:9px;top:218.5px;width:40px;height:1px;background:#333"></div>
<div class="a" style="left:9px;top:252.8px;width:40px;height:1px;background:#333"></div>
<div class="a" style="left:9px;top:287.8px;width:40px;height:1px;background:#333"></div>
<svg style="left:8px;top:184px" width="42" height="139">
 <path d="M20.2 6 L23.2 10 H17.2 Z M20.2 29.7 L23.2 25.7 H17.2 Z M7.9 17.8 L11.9 14.8 V20.8 Z M31.7 17.8 L27.7 14.8 V20.8 Z" fill="#e0e0e0"/>
 <path d="M20.2 10 V14.5 M20.2 21 V25.7 M11.9 17.8 H16.5 M23.9 17.8 H27.7" stroke="#e0e0e0" stroke-width="1.5"/>
 <path d="M12.5 48.5 A8.6 8.6 0 0 1 27.5 47.5 M28 56 A8.6 8.6 0 0 1 12.8 56.5" stroke="#e0e0e0" stroke-width="1.1" fill="none"/>
 <path d="M9 50.8 L11.6 55 L14.2 50.8 Z M26.2 55 L28.8 50.8 L31.4 55 Z" fill="#e0e0e0"/>
 <path d="M20.2 48.2 L23.6 51.6 L20.2 55 L16.8 51.6 Z" fill="#b0b0b0"/>
 <rect x="10.9" y="86.3" width="8.9" height="9.3" fill="#e0e0e0"/>
 <path d="M11.8 86.3 V78.9 H27.8 V94.7 H20" stroke="#e0e0e0" stroke-width="1.1" fill="none"/>
 <path d="M21.8 88.3 L26 84" stroke="#e0e0e0" stroke-width="1.2"/>
 <path d="M26.6 80.8 L26.6 85.5 L21.9 80.8 Z" fill="#e0e0e0"/>
 <path d="M40 99 V103 H36 Z" fill="#7a7a7a"/>
 <rect x="15.8" y="118" width="8.6" height="8.5" fill="#e0e0e0"/>
 <circle cx="20.2" cy="122.2" r="10.2" fill="none" stroke="#e0e0e0" stroke-width="1.1" stroke-dasharray="6 2"/>
 <path d="M20.2 112 L22.7 115.3 H17.7 Z M20.2 132.4 L22.7 129.1 H17.7 Z M10 122.2 L13.3 119.7 V124.7 Z M30.4 122.2 L27.1 119.7 V124.7 Z" fill="#e0e0e0"/>
</svg>
<div class="btn" style="left:9.2px;top:329.9px;width:40.2px;height:67.7px;background:#2c2c2c;border-radius:5px"></div>
<div class="a" style="left:9.2px;top:363.2px;width:40.2px;height:1px;background:#333"></div>
<svg style="left:9px;top:330px" width="42" height="68">
 <path d="M7.8 22.8 L9 18.5 L20.5 7 Q22 5.8 23.3 7 L24.3 8 Q25.4 9.3 24.2 10.6 L12.8 22 Z" fill="#e6e6e6"/>
 <path d="M8 22.8 L9.3 19.3 L11.7 21.7 Z" fill="#2c2c2c"/>
 <path d="M8.2 24 Q11 26.8 16 24.5 Q20.5 22 22.5 20.5 Q25.5 18.5 28 20 Q30 21.5 31.6 24" stroke="#7fd6a8" stroke-width="1.4" fill="none"/>
 <path d="M37.5 25 V29 H33.5 Z" fill="#7a7a7a"/>
 <rect x="10.3" y="39.4" width="5.4" height="23.6" fill="#e6e6e6"/>
 <rect x="10.3" y="59.1" width="20.8" height="3.9" fill="#e6e6e6"/>
 <path d="M12.5 42 H15.7 M13.5 44.5 H15.7 M12.5 47 H15.7 M13.5 49.5 H15.7 M12.5 52 H15.7 M13.5 54.5 H15.7 M18 61 V63 M20.5 60 V63 M23 61 V63 M25.5 60 V63 M28 61 V63" stroke="#2c2c2c" stroke-width="0.8"/>
 <path d="M15.7 49.5 A9.5 9.5 0 0 1 25.2 59 H15.7 Z" fill="#7fd6a8"/>
 <path d="M15.7 47 A12 12 0 0 1 27.7 59" stroke="#e6e6e6" stroke-width="1.1" fill="none"/>
</svg>
<!--VIEWPORT-->
<!-- OUTLINER -->
<div class="a" style="left:1130px;top:50px;width:235px;height:209.5px;border-radius:5px;overflow:hidden;background:#272727">
 <div class="a" style="left:0;top:0;width:235px;height:25px;background:#424242"></div>
 <div class="a" style="left:0;top:46px;width:235px;height:20px;background:#2c2c2c"></div>
 <div class="a" style="left:0;top:86px;width:235px;height:20px;background:#2c2c2c"></div>
 <div class="a" style="left:0;top:126px;width:235px;height:20px;background:#2c2c2c"></div>
 <div class="a" style="left:0;top:166px;width:235px;height:20px;background:#2c2c2c"></div>
 <div class="a" style="left:0;top:206px;width:235px;height:20px;background:#2c2c2c"></div>
 <div class="a" style="left:0;top:66px;width:235px;height:20.2px;background:#3a5990"></div>
</div>
<div class="btn dk" style="left:1139px;top:53px;width:30px;height:18px"></div>
<svg style="left:1139px;top:53px" width="30" height="18">
 <rect x="4" y="2" width="5" height="3" fill="#d8d8d8"/>
 <path d="M5.5 5 V14.5 H8.5 M5.5 10 H8.5" stroke="#d8d8d8" stroke-width="1" fill="none"/>
 <rect x="10" y="7.8" width="8" height="3.2" fill="#d8d8d8"/><rect x="10" y="12.3" width="8" height="3.2" fill="#d8d8d8"/>
 <path d="M21.3 8 L24.3 11 L27.3 8" stroke="#d8d8d8" stroke-width="1.2" fill="none"/>
</svg>
<div class="btn dk" style="left:1176px;top:53px;width:30px;height:18px"></div>
<svg style="left:1176px;top:53px" width="30" height="18">
 <path d="M8.3 2 h9.5 v9.5 h-9.5 z" stroke="#d8d8d8" stroke-width="1.1" fill="none"/>
 <path d="M6.3 4 v9.5 h9.5 M4.3 6 v9.5 h9.5" stroke="#d8d8d8" stroke-width="1" fill="none"/>
 <path d="M9 11 L12 5.5 L14 8.5 L15 7.5 L17.3 11 Z" fill="#d8d8d8"/>
 <circle cx="15.5" cy="4.5" r="1.1" fill="#d8d8d8"/>
 <path d="M21.5 8.2 L24.7 11.4 L27.9 8.2" stroke="#d8d8d8" stroke-width="1.2" fill="none"/>
</svg>
<div class="btn" style="left:1224px;top:53px;width:109.5px;height:18px;background:#1d1d1d"></div>
<svg style="left:1224px;top:53px" width="30" height="18">
 <circle cx="12.5" cy="7" r="4.2" fill="none" stroke="#d8d8d8" stroke-width="1.1"/>
 <path d="M9.5 10 L5 14.5" stroke="#d8d8d8" stroke-width="1.2"/>
</svg>
<div class="btn" style="left:1351px;top:53px;width:20px;height:18px;background:#2b2b2b"></div>
<svg style="left:1351px;top:53px" width="15" height="18">
 <path d="M2.5 3 H15 L10 9 V15.5 L7.5 13.5 V9 Z" stroke="#d8d8d8" stroke-width="1.1" fill="none"/>
</svg>
<!-- rows -->
<svg style="left:1130px;top:76px" width="235" height="100">
 <path d="M23.5 4.5 h13 v3 h-13 z M24.5 7.5 v9 h11 v-9 M28 10.5 h4" stroke="#d8d8d8" stroke-width="1.1" fill="none"/>
 <path d="M26.5 28 L33 28 L29.75 34 Z" fill="#bdbdbd"/>
 <rect x="45" y="24.5" width="10.5" height="10.5" rx="1.5" fill="#dcdcdc"/>
 <path d="M47 29.5 L49.5 32 L54 26.5" stroke="#222" stroke-width="1.6" fill="none"/>
 <rect x="60.5" y="22" width="19" height="17" rx="3.5" fill="#3a3a3a" stroke="#555" stroke-width="0.8"/>
 <path d="M64 26.5 h12.5 v3 h-12.5 z M65 29.5 v7 h10.5 v-7 M68.5 32 h3.5" stroke="#d8d8d8" stroke-width="1.1" fill="none"/>
 <path d="M50.5 35 V90 M50.5 50 H60 M50.5 70 H60 M50.5 90 H60" stroke="#777" stroke-width="1"/>
 <path d="M46 46.5 L53 50 L46 53.5 Z M46 66.5 L53 70 L46 73.5 Z M46 86.5 L53 90 L46 93.5 Z" fill="#bdbdbd"/>
 <rect x="60.5" y="41.5" width="19" height="17.5" rx="3.5" fill="#56698f" stroke="#7084a8" stroke-width="0.8"/>
 <path d="M65 45 H69 Q75 45 75 50.5 Q75 56 69 56 H65" stroke="#e6924a" stroke-width="3" fill="none"/>
 <path d="M168.5 55.5 L175 49 M174 43 Q177 41.5 180 43 L177.5 45.7 L178.6 47.8 L180.7 48.7 L183.2 46.2 Q184.2 49.5 182.5 51.5 Q180.5 53.5 177 52.5 L170.5 58.5 Q168.5 60 167 58.5 Q165.5 57 167 55.5 L173.5 49 Q172.5 45.5 174 43 Z" stroke="#5e9be0" stroke-width="1.2" fill="none"/>
 <path d="M191.5 46 Q201 44 201 50.5 Q201 57 191.5 56.5" stroke="#1fb79e" stroke-width="1.2" fill="none"/>
 <rect x="189" y="43.5" width="4" height="4" fill="#3a5990" stroke="#1fb79e" stroke-width="1"/>
 <rect x="188" y="54.5" width="4" height="4" fill="#3a5990" stroke="#1fb79e" stroke-width="1"/>
<g transform="translate(0,-1)"> <circle cx="66" cy="68" r="2.7" fill="#e6924a"/><circle cx="73" cy="68" r="3.2" fill="#e6924a"/>
 <rect x="63.5" y="71" width="11" height="6.5" fill="#e6924a"/><path d="M74 74 L78 71 V77.5 Z" fill="#e6924a"/></g>
<g transform="translate(0,-2.5)"> <rect x="143.5" y="64" width="19.5" height="17.5" rx="3.5" fill="#3a3a3a" stroke="#555" stroke-width="0.8"/>
 <circle cx="150" cy="69" r="2.8" fill="none" stroke="#1fb79e" stroke-width="1.1"/><circle cx="156.5" cy="69" r="3" fill="none" stroke="#1fb79e" stroke-width="1.1"/>
 <rect x="148" y="72.5" width="9.5" height="5" fill="none" stroke="#1fb79e" stroke-width="1.1"/><path d="M157.5 75 L161 72.5 V78 Z" fill="none" stroke="#1fb79e" stroke-width="1"/></g>
<g transform="translate(0,2.5)"> <circle cx="69.5" cy="86" r="5.5" fill="#e6924a"/>
 <rect x="67" y="91" width="5" height="1.3" fill="#e6924a"/><rect x="67.5" y="93.3" width="4" height="1.3" fill="#e6924a"/>
 <path d="M67 85 L68.5 88 H70.5 L72 85" stroke="#282828" stroke-width="0.9" fill="none"/>
 <circle cx="139" cy="86.5" r="5.8" fill="none" stroke="#1fb79e" stroke-width="1.1"/>
 <path d="M139 87 V95" stroke="#1fb79e" stroke-width="1.1" stroke-dasharray="1.5 1.2"/></g>
</svg>
<div class="t" style="left:1173.8px;top:76.5px;color:#e0e0e0">Scene Collection</div>
<div class="t" style="left:1213.6px;top:96.5px;color:#e0e0e0">Collection</div>
<div class="t" style="left:1213.6px;top:116.5px;color:#ffaf29">BezierCurve</div>
<div class="t" style="left:1213.6px;top:136.5px;color:#e0e0e0">Camera</div>
<div class="t" style="left:1213.6px;top:156.5px;color:#e0e0e0">Light</div>
<svg style="left:1340px;top:96px" width="20" height="80">
 <g fill="none" stroke="#e6e6e6" stroke-width="1.6">
  <path d="M2.5 10 Q8.5 3 14.5 10 Q8.5 17 2.5 10 Z"/>
  <path d="M2.5 30 Q8.5 23 14.5 30 Q8.5 37 2.5 30 Z"/>
  <path d="M2.5 50 Q8.5 43 14.5 50 Q8.5 57 2.5 50 Z"/>
  <path d="M2.5 70 Q8.5 63 14.5 70 Q8.5 77 2.5 70 Z"/>
 </g>
 <circle cx="8.5" cy="10" r="2" fill="#e6e6e6"/><circle cx="8.5" cy="30" r="2" fill="#e6e6e6"/><circle cx="8.5" cy="50" r="2" fill="#e6e6e6"/><circle cx="8.5" cy="70" r="2" fill="#e6e6e6"/>
</svg>
<!--OUTLINER-->
<!-- PROPERTIES -->
<div class="a" style="left:1130px;top:263px;width:235px;height:445px;border-radius:5px;overflow:hidden;background:#424242">
 <div class="a" style="left:0;top:0;width:235px;height:25px;background:#3d3d3d"></div>
 <div class="a" style="left:0;top:25px;width:28px;height:420px;background:#282828"></div>
</div>
<div class="a" style="left:1132px;top:297px;width:26px;height:26px;background:#2f2f2f;border-radius:4px 0 0 4px"></div>
<div class="a" style="left:1132px;top:333px;width:26px;height:26px;background:#2f2f2f;border-radius:4px 0 0 4px"></div>
<div class="a" style="left:1132px;top:361px;width:26px;height:26px;background:#2f2f2f;border-radius:4px 0 0 4px"></div>
<div class="a" style="left:1132px;top:389px;width:26px;height:25.5px;background:#2f2f2f;border-radius:4px 0 0 4px"></div>
<div class="a" style="left:1132px;top:417px;width:26px;height:26px;background:#2f2f2f;border-radius:4px 0 0 4px"></div>
<div class="a" style="left:1132px;top:445px;width:26px;height:26px;background:#2f2f2f;border-radius:4px 0 0 4px"></div>
<div class="a" style="left:1132px;top:481px;width:26px;height:26px;background:#2f2f2f;border-radius:4px 0 0 4px"></div>
<div class="a" style="left:1132px;top:509px;width:26px;height:26px;background:#424242;border-radius:4px 0 0 4px"></div>
<div class="a" style="left:1132px;top:537px;width:26px;height:26px;background:#2f2f2f;border-radius:4px 0 0 4px"></div>
<div class="a" style="left:1132px;top:565px;width:26px;height:25.5px;background:#2f2f2f;border-radius:4px 0 0 4px"></div>
<div class="a" style="left:1132px;top:593px;width:26px;height:25.5px;background:#2f2f2f;border-radius:4px 0 0 4px"></div>
<div class="a" style="left:1132px;top:621px;width:26px;height:26px;background:#2f2f2f;border-radius:4px 0 0 4px"></div>
<div class="a" style="left:1132px;top:657px;width:26px;height:26px;background:#2f2f2f;border-radius:4px 0 0 4px"></div>
<svg style="left:1130px;top:263px" width="30" height="440">
 <g transform="translate(0,37.5)">
  <path d="M10.5 3 V9" stroke="#d8d8d8" stroke-width="1.2"/><ellipse cx="10.5" cy="11.8" rx="2.5" ry="2.8" fill="#d8d8d8"/><rect x="8" y="11.5" width="5" height="2.5" fill="#d8d8d8"/>
  <path d="M18.5 17 V8" stroke="#d8d8d8" stroke-width="2.4" stroke-linecap="round"/>
  <circle cx="18.5" cy="5.6" r="3.4" fill="#d8d8d8"/>
  <rect x="17.2" y="1.5" width="2.6" height="4.2" fill="#2f2f2f"/>
  <circle cx="18.5" cy="16" r="0.7" fill="#2f2f2f"/>
 </g>
 <g transform="translate(0,73.5)">
  <rect x="8.3" y="5.5" width="13" height="10" rx="1" fill="none" stroke="#d8d8d8" stroke-width="1.4"/>
  <rect x="10.5" y="3" width="6" height="2.5" fill="#d8d8d8"/>
  <path d="M10.5 9 H16 M10.5 12 H16" stroke="#d8d8d8" stroke-width="1.2"/><rect x="17.3" y="8.5" width="2" height="4" fill="#d8d8d8"/>
 </g>
 <g transform="translate(0,101.5)">
  <rect x="6" y="3" width="15" height="4" fill="#d8d8d8"/>
  <rect x="8" y="7" width="11" height="9" fill="none" stroke="#d8d8d8" stroke-width="1.3"/>
  <path d="M9.5 15 L12.5 11 L15 13.5 L17.5 11 V15 Z" fill="#d8d8d8"/>
 </g>
 <g transform="translate(0,129.25)">
  <path d="M9 3 h11 v9 h-11 z" stroke="#d8d8d8" stroke-width="1.2" fill="none"/>
  <path d="M7.5 5 v9 h11 M6 6.5 v9 h11" stroke="#d8d8d8" stroke-width="1" fill="none"/>
  <path d="M10 11 L13 7.5 L15.5 10 L17 8.5 L19 11 Z" fill="#d8d8d8"/>
 </g>
 <g transform="translate(0,157.5)">
  <path d="M10.5 2.5 L7.5 10.5 Q7.5 14 10.5 14 L13.5 14 Z" fill="#d0d0d0"/>
  <circle cx="17.8" cy="12" r="4" fill="#2f2f2f" stroke="#d0d0d0" stroke-width="1.2"/>
  <circle cx="17.8" cy="12" r="2.2" fill="none" stroke="#d0d0d0" stroke-width="0.9"/>
  <circle cx="19.9" cy="4.3" r="2" fill="#d0d0d0"/>
 </g>
 <g transform="translate(0,185.5)">
  <circle cx="15.1" cy="9.4" r="6.4" fill="none" stroke="#d96c7a" stroke-width="1.3"/>
  <path d="M9.7 4.8 L13.5 4 L15.5 7 L13.5 9 L11.5 8.5 L11.8 11 L9.5 10.5 L8.5 7.5 Z M13.5 10.5 L17 10 L18.3 12.5 L16 15 L14.5 14.5 Z" fill="#d96c7a"/>
  <path d="M8.1 16.1 L10.3 14 M19.8 4.8 L22 2.6" stroke="#d96c7a" stroke-width="1.2" stroke-linecap="round"/>
 </g>
 <g transform="translate(0,221.5)">
  <rect x="11.2" y="5.6" width="8" height="7.6" fill="#d9905a"/>
  <path d="M8 6.5 V2.5 H11 M19 2.5 H22 V6.5 M22 12.5 V16.5 H19 M11 16.5 H8 V12.5" stroke="#a8744a" stroke-width="1" fill="none"/>
 </g>
 <g transform="translate(0,249.5)">
  <path d="M9 15 L15 9" stroke="#7aaef5" stroke-width="3.3" stroke-linecap="round"/>
  <circle cx="17.8" cy="6.3" r="4.6" fill="#7aaef5"/>
  <path d="M18.8 5.3 L23 1.1" stroke="#424242" stroke-width="3.2" stroke-linecap="round"/>
 </g>
 <g transform="translate(0,277.5)">
  <path d="M19.6 5.5 A6.3 6.3 0 1 0 20.3 12.5" stroke="#7aaef5" stroke-width="1.1" fill="none"/>
  <circle cx="14.8" cy="10" r="2.8" fill="#7aaef5"/>
  <circle cx="20" cy="4.7" r="1.9" fill="#7aaef5"/>
 </g>
 <g transform="translate(0,305.25)">
  <path d="M21.5 3.8 Q23 5.5 20.5 9 L17 14 Q14.5 17 11 16.5 Q7.5 15.5 7.5 12 Q7.5 8.5 10.5 7.2 L17.5 3.8 Q20 2.8 21.5 3.8 Z" fill="none" stroke="#7aaef5" stroke-width="1.1"/>
  <circle cx="12.8" cy="11.6" r="3.2" fill="none" stroke="#7aaef5" stroke-width="1.2"/>
  <circle cx="12.8" cy="11.6" r="1.3" fill="#7aaef5"/>
  <circle cx="19" cy="5.5" r="0.8" fill="#7aaef5"/>
 </g>
 <g transform="translate(0,333.25)">
  <path d="M15.3 4.9 Q22 5 22 9.5 Q21.5 14.3 11.4 14.4" stroke="#1fb79e" stroke-width="1.2" fill="none"/>
  <rect x="12.3" y="3.4" width="3" height="3" fill="#2f2f2f" stroke="#1fb79e" stroke-width="1"/>
  <rect x="8.4" y="12.9" width="3" height="3" fill="#2f2f2f" stroke="#1fb79e" stroke-width="1"/>
 </g>
 <g transform="translate(0,361.5)">
  <circle cx="14.8" cy="9.5" r="7" fill="#d96c6c"/>
  <path d="M14.8 9.5 V3.7 A5.8 5.8 0 0 1 20.6 9.5 Z M14.8 9.5 V15.3 A5.8 5.8 0 0 1 9 9.5 Z" fill="#2a2a2a"/>
 </g>
 <g transform="translate(0,397.5)">
  <rect x="7.8" y="2.8" width="14" height="14" fill="#d96c6c"/>
  <rect x="11.60" y="3.10" width="2.9" height="2.9" fill="#2a2a2a"/><rect x="18.60" y="3.10" width="2.9" height="2.9" fill="#2a2a2a"/><rect x="8.10" y="6.60" width="2.9" height="2.9" fill="#2a2a2a"/><rect x="15.10" y="6.60" width="2.9" height="2.9" fill="#2a2a2a"/><rect x="11.60" y="10.10" width="2.9" height="2.9" fill="#2a2a2a"/><rect x="18.60" y="10.10" width="2.9" height="2.9" fill="#2a2a2a"/><rect x="8.10" y="13.60" width="2.9" height="2.9" fill="#2a2a2a"/><rect x="15.10" y="13.60" width="2.9" height="2.9" fill="#2a2a2a"/>
 </g>
</svg>
<div class="btn dk" style="left:1139px;top:265.5px;width:30px;height:18.5px"></div>
<svg style="left:1139px;top:265.5px" width="30" height="19">
 <rect x="4" y="2.3" width="14.3" height="6" rx="3" fill="#d8d8d8"/><rect x="10.3" y="3.4" width="7" height="3.8" rx="1.9" fill="#2b2b2b"/>
 <rect x="4" y="10.3" width="14.3" height="6" rx="3" fill="#d8d8d8"/><rect x="10.3" y="11.4" width="7" height="3.8" rx="1.9" fill="#2b2b2b"/>
 <path d="M21.3 8.5 L24.3 11.5 L27.3 8.5" stroke="#d8d8d8" stroke-width="1.2" fill="none"/>
</svg>
<svg style="left:1183px;top:267px" width="16" height="16">
 <path d="M1 4 V1 H4 M12 1 H15 V4 M15 12 V15 H12 M4 15 H1 V12" stroke="#d8d8d8" stroke-width="1" fill="none"/>
 <rect x="3.5" y="3.5" width="9" height="9" fill="#e8e8e8"/>
</svg>
<div class="t" style="left:1205.5px;top:265px;color:#e6e6e6">BezierCurve</div>
<svg style="left:1340px;top:266px" width="18" height="18">
 <path d="M2 16 L7 11" stroke="#c8c8c8" stroke-width="1.1"/>
 <path d="M5 9 L8 9.5 L11.5 6 L11.2 4 L13 2.5 L16.5 6 L15 7.8 L13 7.5 L9.5 11 L10 14 Z" stroke="#c8c8c8" stroke-width="1.1" fill="none"/>
</svg>
<div class="btn" style="left:1167px;top:297px;width:190px;height:18px;background:#2b2b2b"></div>
<div class="t" style="left:1173.2px;top:296.2px;color:#e6e6e6;">Add Modifier</div>
<svg style="left:1340px;top:297px" width="17" height="18"><path d="M9 8 L12 11 L15 8" stroke="#d8d8d8" stroke-width="1.2" fill="none"/></svg>
<div class="a" style="left:1162.8px;top:328px;width:198.2px;height:334.5px;background:#3a3a3a;border-radius:4px"></div>
<div class="a" style="left:1162.8px;top:328px;width:198.2px;height:24px;background:#3d3d3d;border-radius:4px 4px 0 0"></div>
<div class="a" style="left:1162.8px;top:352px;width:198.2px;height:1px;background:#333"></div>
<svg style="left:1163.5px;top:328px" width="198" height="24">
 <path d="M7 10 H13 L10 15 Z" fill="#a0a0a0"/>
 <path d="M35.6 4 Q35 10.8 28 10.8 Q21.5 10.8 21.5 8.3 Q21.5 5.8 28 5.8 Q32 5.8 33.8 6.8" stroke="#d8d8d8" stroke-width="1.1" fill="none"/>
 <path d="M35.6 11.3 Q35 18 28 18 Q21.5 18 21.5 15.5 Q21.5 13 28 13 Q32 13 33.8 14" stroke="#d8d8d8" stroke-width="1.1" fill="none"/>
 <circle cx="35.3" cy="19" r="0.6" fill="#d8d8d8"/>
</svg>
<div class="btn" style="left:1210.8px;top:330.6px;width:102.2px;height:18.6px;background:#2b2b2b"></div>
<div class="a" style="left:1210.8px;top:330.6px;width:32.8px;height:18.6px;background:#1d1d1d;border-radius:4px 0 0 4px"></div>
<div class="a" style="left:1243.6px;top:330.6px;width:16.7px;height:18.6px;background:#5680c2"></div>
<div class="a" style="left:1261.8px;top:330.6px;width:15.8px;height:18.6px;background:#5680c2"></div>
<div class="a" style="left:1279.1px;top:330.6px;width:16.9px;height:18.6px;background:#5680c2"></div>
<svg style="left:1243.6px;top:330.6px" width="70" height="19">
 <rect x="2.5" y="4" width="9.5" height="10.5" fill="none" stroke="#e8e8e8" stroke-width="0.9"/>
 <rect x="1" y="2.5" width="3" height="3" fill="#5680c2" stroke="#e8e8e8" stroke-width="0.9"/>
 <rect x="1" y="13" width="3" height="3" fill="#5680c2" stroke="#e8e8e8" stroke-width="0.9"/>
 <rect x="10.5" y="13" width="3" height="3" fill="#5680c2" stroke="#e8e8e8" stroke-width="0.9"/>
 <rect x="10.5" y="1.5" width="4.5" height="4.5" fill="#f0f0f0"/>
 <rect x="20.5" y="4.5" width="11" height="7.5" rx="1" fill="none" stroke="#f0f0f0" stroke-width="1.3"/>
 <path d="M26 12.5 V14.5 M22.5 15 H29.5" stroke="#f0f0f0" stroke-width="1.2"/>
 <path d="M38.5 5.5 H41 L42 4 H45.5 L46.5 5.5 H49.5 V14 H38.5 Z" fill="#f0f0f0"/>
 <circle cx="44" cy="9.8" r="3" fill="#5680c2"/><circle cx="44" cy="9.8" r="1.6" fill="#f0f0f0"/>
 <path d="M56 8 L59 11 L62 8" stroke="#d8d8d8" stroke-width="1.2" fill="none"/>
</svg>
<svg style="left:1316px;top:331px" width="48" height="18">
 <path d="M3 5 L11 13 M11 5 L3 13" stroke="#d8d8d8" stroke-width="1.2"/>
 <path d="M28 7.5 h1 M30.5 7.5 h1 M33 7.5 h1 M35.5 7.5 h1 M28 10 h1 M30.5 10 h1 M33 10 h1 M35.5 10 h1" stroke="#a8a8a8" stroke-width="1.2"/>
</svg>
<div class="t" style="left:1216.5px;top:330.2px;color:#e6e6e6;">Scre</div>
<div class="a" style="left:1235.8px;top:360.7px;width:97.4px;height:18.3px;background:#545454;border-radius:4px"></div>
<div class="t" style="left:1078px;width:150px;text-align:right;top:360.1px;color:#e6e6e6;">Angle</div>
<div class="t" style="left:1235.8px;width:97.4px;text-align:center;top:360.1px;color:#e6e6e6;">360°</div>
<div class="a" style="left:1341.8px;top:367.7px;width:4.4px;height:4.4px;border-radius:50%;background:#d8d8d8"></div>
<div class="a" style="left:1235.8px;top:382.8px;width:97.4px;height:18.2px;background:#545454;border-radius:4px"></div>
<div class="t" style="left:1078px;width:150px;text-align:right;top:382.1px;color:#e6e6e6;">Screw</div>
<div class="t" style="left:1235.8px;width:97.4px;text-align:center;top:382.1px;color:#e6e6e6;">0 m</div>
<div class="a" style="left:1341.8px;top:389.7px;width:4.4px;height:4.4px;border-radius:50%;background:#d8d8d8"></div>
<div class="a" style="left:1235.8px;top:404.8px;width:97.4px;height:18.2px;background:#545454;border-radius:4px"></div>
<div class="t" style="left:1078px;width:150px;text-align:right;top:404.1px;color:#e6e6e6;">Iterations</div>
<div class="t" style="left:1235.8px;width:97.4px;text-align:center;top:404.1px;color:#e6e6e6;">1</div>
<div class="a" style="left:1341.8px;top:411.7px;width:4.4px;height:4.4px;border-radius:50%;background:#d8d8d8"></div>
<div class="a" style="left:1235.8px;top:441.1px;width:97.4px;height:17.8px;background:#545454;border-radius:4px"></div>
<div class="a" style="left:1300.2px;top:441.1px;width:33px;height:17.8px;background:#5680c2;border-radius:0 4px 4px 0"></div>
<div class="a" style="left:1267px;top:441.1px;width:1px;height:17.8px;background:#474747"></div>
<div class="t" style="left:1078px;width:150px;text-align:right;top:440.2px;color:#e6e6e6;">Axis</div>
<div class="t" style="left:1235.8px;width:31.2px;text-align:center;top:440.2px;color:#e6e6e6;">X</div>
<div class="t" style="left:1267px;width:33.2px;text-align:center;top:440.2px;color:#e6e6e6;">Y</div>
<div class="t" style="left:1300.2px;width:33px;text-align:center;top:440.2px;color:#e6e6e6;">Z</div>
<div class="a" style="left:1341.8px;top:447.8px;width:4.4px;height:4.4px;border-radius:50%;background:#d8d8d8"></div>
<div class="a" style="left:1235.8px;top:464.5px;width:97.4px;height:16.9px;background:#1d1d1d;border-radius:4px"></div>
<div class="t" style="left:1078px;width:150px;text-align:right;top:462.2px;color:#e6e6e6;">Axis Object</div>
<svg style="left:1238px;top:465px" width="96" height="17">
 <path d="M1 4 V1 H4 M12 1 H15 V4 M15 12 V15 H12 M4 15 H1 V12" stroke="#d8d8d8" stroke-width="1" fill="none"/>
 <rect x="3.5" y="3.5" width="9" height="9" fill="#e8e8e8"/>
 <path d="M79 15 L80 12 L86 6" stroke="#e0e0e0" stroke-width="1.2" fill="none"/>
 <path d="M84 4.5 L87.5 1 Q89 0 90.5 1.5 Q92 3 91 4.5 L87.5 8 Z" fill="#e0e0e0"/>
 <path d="M83 5 L91 13" stroke="#e0e0e0" stroke-width="0" />
</svg>
<div class="a" style="left:1236.3px;top:488px;width:11.5px;height:11.6px;background:#474747;border-radius:3px"></div>
<div class="t" style="left:1251px;top:484.2px;color:#7d7d7d;">Object Screw</div>
<div class="a" style="left:1341.8px;top:491.8px;width:4.4px;height:4.4px;border-radius:50%;background:#5a5a5a"></div>
<div class="a" style="left:1235.8px;top:520.7px;width:97.4px;height:38.3px;background:#545454;border-radius:4px"></div>
<div class="a" style="left:1235.8px;top:539px;width:97.4px;height:1px;background:#474747"></div>
<div class="t" style="left:1078px;width:150px;text-align:right;top:520.2px;color:#e6e6e6;">Steps Vie...</div>
<div class="t" style="left:1078px;width:150px;text-align:right;top:539.4px;color:#e6e6e6;">Render</div>
<div class="t" style="left:1235.8px;width:97.4px;text-align:center;top:520.2px;color:#e6e6e6;">16</div>
<div class="t" style="left:1235.8px;width:97.4px;text-align:center;top:539.4px;color:#e6e6e6;">16</div>
<div class="a" style="left:1341.8px;top:527.8px;width:4.4px;height:4.4px;border-radius:50%;background:#d8d8d8"></div>
<div class="a" style="left:1341.8px;top:547.0px;width:4.4px;height:4.4px;border-radius:50%;background:#d8d8d8"></div>
<div class="a" style="left:1235.9px;top:580.4px;width:12.3px;height:11.7px;background:#595959;border-radius:3px"></div>
<div class="a" style="left:1255.9px;top:576.7px;width:77.2px;height:18.1px;background:#474747;border-radius:4px"></div>
<div class="t" style="left:1078px;width:150px;text-align:right;top:576.2px;color:#e6e6e6;">Merge</div>
<div class="t" style="left:1255.9px;width:77.2px;text-align:center;top:576.2px;color:#8a8a8a;">0.01 m</div>
<div class="a" style="left:1341.8px;top:583.8px;width:4.4px;height:4.4px;border-radius:50%;background:#d8d8d8"></div>
<div class="a" style="left:1235.9px;top:613.3px;width:97.2px;height:17.5px;background:#545454;border-radius:4px"></div>
<div class="a" style="left:1283px;top:613.3px;width:1px;height:17.5px;background:#474747"></div>
<div class="t" style="left:1075px;width:150px;text-align:right;top:612.2px;color:#e6e6e6;">Stretch UV</div>
<div class="t" style="left:1235.9px;width:47.3px;text-align:center;top:612.2px;color:#e6e6e6;">U</div>
<div class="t" style="left:1283.2px;width:49.9px;text-align:center;top:612.2px;color:#e6e6e6;">V</div>
<svg style="left:1184.5px;top:648px" width="10" height="10"><path d="M1 1 L7 4.5 L1 8 Z" fill="#a0a0a0"/></svg>
<div class="t" style="left:1197.5px;top:642.2px;color:#e6e6e6;">Normals</div>
<!--PROPERTIES-->
<!-- TIMELINE -->
<div class="a" style="left:1px;top:659px;width:1126px;height:49px;border-radius:5px;overflow:hidden;background:#282828">
 <div class="a" style="left:0;top:0;width:1126px;height:25px;background:#323232"></div>
</div>
<div class="btn dk" style="left:8.8px;top:662.2px;width:30.6px;height:18.6px;background:#282828;border:1px solid #3a3a3a"></div>
<svg style="left:9.2px;top:662.8px" width="30" height="19">
 <circle cx="10.9" cy="9" r="6.8" fill="#e0e0e0"/>
 <path d="M12.3 5.2 L9.3 9 L12.3 12.8" stroke="#282828" stroke-width="1.6" fill="none"/>
 <path d="M21.2 8.2 L24.4 11.4 L27.6 8.2" stroke="#d8d8d8" stroke-width="1.2" fill="none"/>
</svg>
<div class="btn" style="left:45.8px;top:662.2px;width:127.4px;height:18.6px;background:#282828;border:1px solid #3a3a3a"></div>
<div class="a" style="left:114px;top:662.8px;width:1px;height:18.5px;background:#3a3a3a"></div>
<div class="t" style="left:51.8px;top:662.3px">Playback</div>
<div class="t" style="left:120.8px;top:662.3px">Keying</div>
<svg style="left:46px;top:662.8px" width="128" height="19">
 <path d="M59.5 8.2 L62.7 11.4 L65.9 8.2 M118.5 8.2 L121.7 11.4 L124.9 8.2" stroke="#d8d8d8" stroke-width="1.2" fill="none"/>
</svg>
<div class="t" style="left:180.5px;top:662.3px">View</div>
<div class="t" style="left:220.5px;top:662.3px">Marker</div>
<div class="btn" style="left:482.2px;top:663.2px;width:17.8px;height:17.8px;background:#4a4a4a"></div>
<svg style="left:482.2px;top:663.2px" width="18" height="18"><circle cx="9" cy="9" r="4.5" fill="#e0e0e0"/></svg>
<div class="btn" style="left:507.2px;top:663.2px;width:117.5px;height:17.8px;background:#4a4a4a"></div>
<svg style="left:507.2px;top:663.2px" width="118" height="18">
 <path d="M19.6 0 V18 M39.2 0 V18 M58.8 0 V18 M78.3 0 V18 M97.9 0 V18" stroke="#3e3e3e" stroke-width="1"/>
 <path d="M6 4.5 V13.5" stroke="#e0e0e0" stroke-width="1.6"/><path d="M14 4.5 V13.5 L7.5 9 Z" fill="#e0e0e0"/>
 <path d="M27.5 5 L31.5 9 L27.5 13 L23.5 9 Z M35.5 4.5 V13.5 L31 9 Z" fill="#e0e0e0"/>
 <path d="M52.5 4 V14 L44 9 Z" fill="#e0e0e0"/>
 <path d="M64.5 4 V14 L73 9 Z" fill="#e0e0e0"/>
 <path d="M82.5 4.5 V13.5 L87 9 Z M90.5 5 L94.5 9 L90.5 13 L86.5 9 Z" fill="#e0e0e0"/>
 <path d="M103.5 4.5 V13.5 L110 9 Z" fill="#e0e0e0"/><path d="M111.5 4.5 V13.5" stroke="#e0e0e0" stroke-width="1.6"/>
</svg>
<div class="btn" style="left:837.6px;top:662.7px;width:73.4px;height:18.1px;background:#4a4a4a"></div>
<div class="t" style="left:837.6px;width:73.4px;text-align:center;top:662.2px">1</div>
<div class="btn" style="left:918px;top:662.7px;width:190px;height:18.1px;background:#4a4a4a"></div>
<div class="a" style="left:918px;top:662.7px;width:18.5px;height:18.1px;background:#555;border-radius:4px 0 0 4px"></div>
<div class="a" style="left:936.5px;top:662.7px;width:1px;height:18.1px;background:#3e3e3e"></div>
<div class="a" style="left:1024.6px;top:662.7px;width:1px;height:18.1px;background:#3e3e3e"></div>
<svg style="left:918px;top:662.7px" width="19" height="19">
 <circle cx="9.3" cy="10.5" r="5.5" fill="none" stroke="#e0e0e0" stroke-width="1.1"/>
 <path d="M9.3 7 V10.5 H12 M7 3.5 H11.5 M9.3 3.5 V5 M14 5 L15.5 6.5" stroke="#e0e0e0" stroke-width="1.1" fill="none"/>
</svg>
<div class="t" style="left:950.3px;top:662.2px">Start</div>
<div class="t" style="left:999px;width:12px;text-align:right;top:662.2px">1</div>
<div class="t" style="left:1038.8px;top:662.2px">End</div>
<div class="t" style="left:1057.5px;width:36px;text-align:right;top:662.2px">250</div>
<!-- frame numbers (partially hidden) -->
<div class="a" style="left:1px;top:684px;width:1126px;height:12.5px;overflow:hidden">
 <div class="a" style="left:29.4px;top:2.8px;width:23.3px;height:14px;background:#5680c2;border-radius:4px"></div>
 <div class="t" style="left:29.4px;width:23.3px;text-align:center;top:4px;color:#fff">1</div>
<div class="t" style="left:101.0px;width:40px;text-align:center;top:1.5px;color:#d0d0d0">20</div>
<div class="t" style="left:184.7px;width:40px;text-align:center;top:1.5px;color:#d0d0d0">40</div>
<div class="t" style="left:268.4px;width:40px;text-align:center;top:1.5px;color:#d0d0d0">60</div>
<div class="t" style="left:352.1px;width:40px;text-align:center;top:1.5px;color:#d0d0d0">80</div>
<div class="t" style="left:435.8px;width:40px;text-align:center;top:1.5px;color:#d0d0d0">100</div>
<div class="t" style="left:519.5px;width:40px;text-align:center;top:1.5px;color:#d0d0d0">120</div>
<div class="t" style="left:603.2px;width:40px;text-align:center;top:1.5px;color:#d0d0d0">140</div>
<div class="t" style="left:686.9px;width:40px;text-align:center;top:1.5px;color:#d0d0d0">160</div>
<div class="t" style="left:770.6px;width:40px;text-align:center;top:1.5px;color:#d0d0d0">180</div>
<div class="t" style="left:854.3px;width:40px;text-align:center;top:1.5px;color:#d0d0d0">200</div>
<div class="t" style="left:938.0px;width:40px;text-align:center;top:1.5px;color:#d0d0d0">220</div>
<div class="t" style="left:1021.7px;width:40px;text-align:center;top:1.5px;color:#d0d0d0">240</div>
</div>
<svg style="left:0;top:684px" width="1128" height="24"><rect x="120.5" y="0" width="1" height="24" fill="#2f2f2f"/><rect x="204.2" y="0" width="1" height="24" fill="#2f2f2f"/><rect x="287.9" y="0" width="1" height="24" fill="#2f2f2f"/><rect x="371.6" y="0" width="1" height="24" fill="#2f2f2f"/><rect x="455.3" y="0" width="1" height="24" fill="#2f2f2f"/><rect x="539.0" y="0" width="1" height="24" fill="#2f2f2f"/><rect x="622.7" y="0" width="1" height="24" fill="#2f2f2f"/><rect x="706.4" y="0" width="1" height="24" fill="#2f2f2f"/><rect x="790.1" y="0" width="1" height="24" fill="#2f2f2f"/><rect x="873.8" y="0" width="1" height="24" fill="#2f2f2f"/><rect x="957.5" y="0" width="1" height="24" fill="#2f2f2f"/><rect x="1041.2" y="0" width="1" height="24" fill="#2f2f2f"/><rect x="40.5" y="12" width="2" height="12" fill="#5680c2"/></svg>
<div class="a" style="left:8.6px;top:695.8px;width:1111px;height:9px;background:#646464;border-radius:4.5px;border:1px solid #4a4a4a"></div>
<div class="a" style="left:10px;top:697.1px;width:6.6px;height:6.6px;background:#474747;border-radius:50%"></div>
<div class="a" style="left:1111px;top:697.1px;width:6.6px;height:6.6px;background:#474747;border-radius:50%"></div>
<!--TIMELINE-->
<!-- STATUS -->
<div class="a" style="left:0;top:708px;width:1365px;height:20px;background:#2e2e2e"></div>
<div class="a" style="left:0;top:728px;width:1365px;height:2px;background:#0a0a0a"></div>
<svg style="left:0;top:708px" width="620" height="20">
<rect x="12.5" y="3.5" width="10.2" height="14.3" rx="3.6" fill="none" stroke="#cfcfcf" stroke-width="1.1"/><path d="M12.9 9.6 V7.2 Q12.9 4 16 4 H17.3 V9.6 Z" fill="#bdbdbd"/>
<rect x="76.2" y="3.5" width="10.2" height="14.3" rx="3.6" fill="none" stroke="#cfcfcf" stroke-width="1.1"/><path d="M76.6 9.6 V7.2 Q76.6 4 79.7 4 H81 V9.6 Z" fill="#bdbdbd"/><path d="M88.5 2.5 L89.2 3.5 V11.5 M91.8 4.5 V9.5" stroke="#cfcfcf" stroke-width="1.1" fill="none"/>
<rect x="248.3" y="3.5" width="10.2" height="14.3" rx="3.6" fill="none" stroke="#cfcfcf" stroke-width="1.1"/><rect x="251.8" y="5.5" width="3" height="5" rx="1.2" fill="#cfcfcf"/>
<rect x="484.5" y="3.5" width="10.2" height="14.3" rx="3.6" fill="none" stroke="#cfcfcf" stroke-width="1.1"/><path d="M494.2 9.6 V7.2 Q494.2 4 491.1 4 H489.8 V9.6 Z" fill="#bdbdbd"/>
</svg>
<div class="t" style="left:33.8px;top:707.8px;color:#c8c8c8">Select</div>
<div class="t" style="left:99.8px;top:707.8px;color:#c8c8c8">Box Select</div>
<div class="t" style="left:269.8px;top:707.8px;color:#c8c8c8">Rotate View</div>
<div class="t" style="left:506.2px;top:707.8px;color:#c8c8c8">Object Context Menu</div>
<div class="t" style="left:1315.8px;top:707.8px;color:#c8c8c8">2.90.0</div>
<!--STATUS-->
<svg style="left:0;top:0" width="1365" height="730">
 <rect x="1191.8" y="433" width="163.8" height="28.6" fill="none" stroke="#ff0000" stroke-width="3"/>
 <path d="M1065.5 548 L1174 462.5" stroke="#ff0000" stroke-width="3" stroke-linecap="round"/>
 <path d="M1183.5 455 L1176 468.8 L1168.3 459 Z" fill="#ff0000"/>
</svg>
<!--ANNOT-->
</body></html>
